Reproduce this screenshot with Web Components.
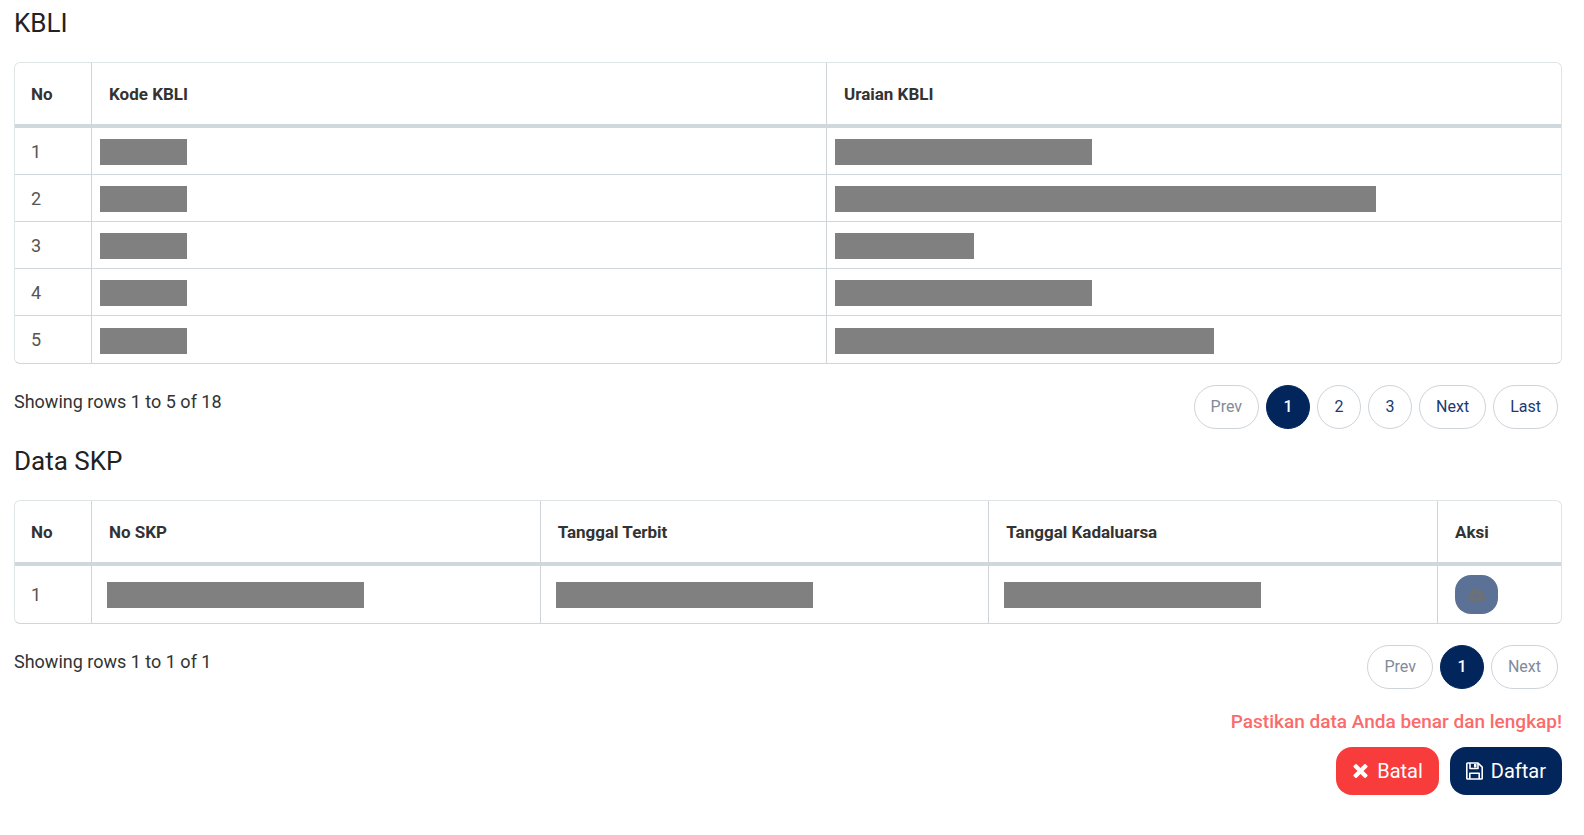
<!DOCTYPE html>
<html lang="id">
<head>
<meta charset="utf-8">
<meta name="viewport" content="width=device-width, initial-scale=1">
<title>Pendaftaran</title>
<style>
    body {
        margin: 0;
        padding: 6px 22px 40px 14px;
        background: #fff;
        color: #333;
        font-family: Roboto, "Liberation Sans", sans-serif;
    }
</style>
</head>
<body>
<x-section heading="KBLI">
    <x-grid id="kbli"></x-grid>
    <x-pager info="Showing rows 1 to 5 of 18" pages="3" last></x-pager>
</x-section>
<x-section heading="Data SKP">
    <x-grid id="skp"></x-grid>
    <x-pager info="Showing rows 1 to 1 of 1" pages="1"></x-pager>
</x-section>
<x-form-actions>
    <span slot="note">Pastikan data Anda benar dan lengkap!</span>
    <x-button kind="danger" icon="times">Batal</x-button>
    <x-button kind="primary" icon="save">Daftar</x-button>
</x-form-actions>

<template id="section-template">
    <style>
        :host {
            display: block;
            margin-bottom: 15px;
        }
        h2 {
            margin: 0 0 22px;
            color: #222;
            font-size: 26px;
            font-weight: 400;
            line-height: 34px;
        }
    </style>
    <h2></h2>
    <slot></slot>
</template>

<template id="grid-template">
    <style>
        :host {
            display: block;
        }
        table {
            box-sizing: border-box;
            width: 100%;
            table-layout: fixed;
            border: 1px solid #dfe4e7;
            border-bottom-color: #ced7db;
            border-radius: 6px;
            border-spacing: 0;
        }
        th, td {
            box-sizing: border-box;
            padding: 0 17px;
            text-align: left;
            border-left: 1px solid #ced4d8;
        }
        th:first-child, td:first-child {
            padding: 0 16px;
            border-left: 0;
        }
        th {
            height: 65px;
            border-bottom: 4px solid #cfd9dd;
            font-size: 17px;
            font-weight: 700;
        }
        td {
            height: var(--row-height, 47px);
            border-bottom: 1px solid #ced7db;
            color: #555;
            font-size: 18px;
            font-weight: 400;
        }
        tr:last-child td {
            border-bottom: 0;
        }
        td.masked {
            padding: var(--mask-padding, 2px 8px 0);
        }
        .mask {
            display: block;
            max-width: 100%;
            height: 26px;
            background: #808080;
        }
        .download {
            display: flex;
            align-items: center;
            justify-content: center;
            width: 43px;
            height: 39px;
            padding: 0;
            border: 0;
            border-radius: 16px;
            background: #5b7296;
            color: #6d7075;
        }
        .download svg {
            width: 18px;
            height: 14px;
        }
    </style>
    <table>
        <colgroup></colgroup>
        <thead><tr></tr></thead>
        <tbody></tbody>
    </table>
</template>

<template id="download-template">
    <button class="download" type="button" disabled aria-label="Unduh">
        <svg viewBox="0 0 18 14" aria-hidden="true">
            <path fill="currentColor" fill-rule="evenodd" d="M4.2 13.5A3.9 3.9 0 0 1 2.7 6 4.8 4.8 0 0 1 11.7 3.1 2.8 2.8 0 0 1 15 6.7 3.5 3.5 0 0 1 14.4 13.5ZM7.2 5V7.6H5.2L8.2 10.8 11.2 7.6H9.2V5Z"/>
        </svg>
    </button>
</template>

<template id="pager-template">
    <style>
        :host {
            display: flex;
            justify-content: space-between;
            align-items: flex-start;
            margin-top: 21px;
        }
        .info {
            font-size: 18px;
            line-height: 34px;
        }
        nav {
            display: flex;
            gap: 7px;
            padding-right: 4px;
        }
        button {
            box-sizing: border-box;
            min-width: 44px;
            height: 44px;
            padding: 0 16px;
            border: 1px solid #ced4da;
            border-radius: 22px;
            background: #fff;
            color: #1c3a70;
            font: 400 16px/24px Roboto, "Liberation Sans", sans-serif;
        }
        button.page {
            padding: 0;
        }
        button:disabled {
            color: #7f8b99;
        }
        button[aria-current] {
            border-color: #02265c;
            background: #02265c;
            color: #fff;
            font-weight: 500;
        }
    </style>
    <span class="info"></span>
    <nav aria-label="Halaman"></nav>
</template>

<template id="form-actions-template">
    <style>
        :host {
            display: flex;
            flex-direction: column;
            align-items: flex-end;
            gap: 13px;
            margin-top: 21px;
        }
        .note {
            color: #fb6b6b;
            font-size: 19px;
            font-weight: 500;
            line-height: 24px;
        }
        .buttons {
            display: flex;
            gap: 11px;
        }
    </style>
    <div class="note"><slot name="note"></slot></div>
    <div class="buttons"><slot></slot></div>
</template>

<template id="button-template">
    <style>
        :host {
            display: block;
        }
        button {
            display: flex;
            align-items: center;
            gap: 8px;
            height: 48px;
            padding: 0 16px;
            border: 0;
            border-radius: 16px;
            background: #02265c;
            color: #fff;
            font: 400 20px/24px Roboto, "Liberation Sans", sans-serif;
        }
        :host([kind="danger"]) button {
            background: #f83b3b;
        }
        svg {
            width: 17px;
            height: 18px;
        }
    </style>
    <button type="button">
        <svg viewBox="0 0 17 18" aria-hidden="true"></svg>
        <slot></slot>
    </button>
</template>

<script>
    const ICONS = {
        times: `<path fill="currentColor" d="M4.7 2.2 8.5 6l3.8-3.8q.7-.6 1.4 0l1.6 1.6q.7.7 0 1.4L11.5 9l3.8 3.8q.7.7 0 1.4l-1.6 1.6q-.7.6-1.4 0L8.5 12l-3.8 3.8q-.7.6-1.4 0l-1.6-1.6q-.7-.7 0-1.4L5.5 9 1.7 5.2q-.7-.7 0-1.4l1.6-1.6q.7-.6 1.4 0z"/>`,
        save: `<path fill="none" stroke="currentColor" stroke-width="1.6" stroke-linejoin="round" d="M.8 1.8Q.8 1 1.6 1H12l4.2 4.1v11.1q0 .8-.8.8H1.6q-.8 0-.8-.8ZM4 1v5.5h8V1M3.8 17v-5.7h9.4V17"/><path fill="currentColor" d="M8 2h2.5v3.5H8z"/>`,
    };

    function attach(host, id) {
        const root = host.attachShadow({ mode: "open" });
        root.append(document.getElementById(id).content.cloneNode(true));
        return root;
    }

    class SectionElement extends HTMLElement {
        constructor() {
            super();
            attach(this, "section-template");
        }

        connectedCallback() {
            this.shadowRoot.querySelector("h2").textContent = this.getAttribute("heading");
        }
    }

    class GridElement extends HTMLElement {
        constructor() {
            super();
            attach(this, "grid-template");
        }

        /**@param {{name: string, width?: number}[]} columns */
        set columns(columns) {
            const group = this.shadowRoot.querySelector("colgroup");
            const head = this.shadowRoot.querySelector("thead tr");
            for (const { name, width } of columns) {
                const col = document.createElement("col");
                if (width) col.style.width = `${width}px`;
                group.append(col);

                const th = document.createElement("th");
                th.scope = "col";
                th.textContent = name;
                head.append(th);
            }
        }

        // a number in { mask } is the width of a hidden value
        set rows(rows) {
            const body = this.shadowRoot.querySelector("tbody");
            for (const row of rows) {
                const tr = body.insertRow();
                for (const value of row) this.#fillCell(tr.insertCell(), value);
            }
        }

        #fillCell(td, value) {
            if (value.mask) {
                const mask = document.createElement("span");
                mask.className = "mask";
                mask.style.width = `${value.mask}px`;
                td.className = "masked";
                td.append(mask);
            } else if (value.download) {
                td.append(document.getElementById("download-template").content.cloneNode(true));
            } else {
                td.textContent = value;
            }
        }
    }

    class PagerElement extends HTMLElement {
        constructor() {
            super();
            attach(this, "pager-template");
        }

        connectedCallback() {
            const pages = Number(this.getAttribute("pages"));
            this.shadowRoot.querySelector(".info").textContent = this.getAttribute("info");

            this.#addButton("Prev").disabled = true;
            for (let i = 1; i <= pages; i++) {
                const button = this.#addButton(i);
                button.className = "page";
                if (i == 1) button.setAttribute("aria-current", "page");
            }
            this.#addButton("Next").disabled = pages == 1;
            if (this.hasAttribute("last")) this.#addButton("Last");
        }

        #addButton(label) {
            const button = document.createElement("button");
            button.type = "button";
            button.textContent = label;
            this.shadowRoot.querySelector("nav").append(button);
            return button;
        }
    }

    class FormActionsElement extends HTMLElement {
        constructor() {
            super();
            attach(this, "form-actions-template");
        }
    }

    class ButtonElement extends HTMLElement {
        constructor() {
            super();
            attach(this, "button-template");
        }

        connectedCallback() {
            this.shadowRoot.querySelector("svg").innerHTML = ICONS[this.getAttribute("icon")];
        }
    }

    customElements.define("x-section", SectionElement);
    customElements.define("x-grid", GridElement);
    customElements.define("x-pager", PagerElement);
    customElements.define("x-form-actions", FormActionsElement);
    customElements.define("x-button", ButtonElement);

    const kbli = document.getElementById("kbli");
    kbli.columns = [{ name: "No", width: 76 }, { name: "Kode KBLI" }, { name: "Uraian KBLI" }];
    kbli.rows = [257, 541, 139, 257, 379].map((width, i) => [i + 1, { mask: 87 }, { mask: width }]);

    const skp = document.getElementById("skp");
    skp.style.setProperty("--row-height", "57px");
    skp.style.setProperty("--mask-padding", "0 15px");
    skp.columns = [
        { name: "No", width: 76 },
        { name: "No SKP" },
        { name: "Tanggal Terbit" },
        { name: "Tanggal Kadaluarsa" },
        { name: "Aksi", width: 124 },
    ];
    skp.rows = [[1, { mask: 257 }, { mask: 257 }, { mask: 257 }, { download: true }]];
</script>
</body>
</html>
